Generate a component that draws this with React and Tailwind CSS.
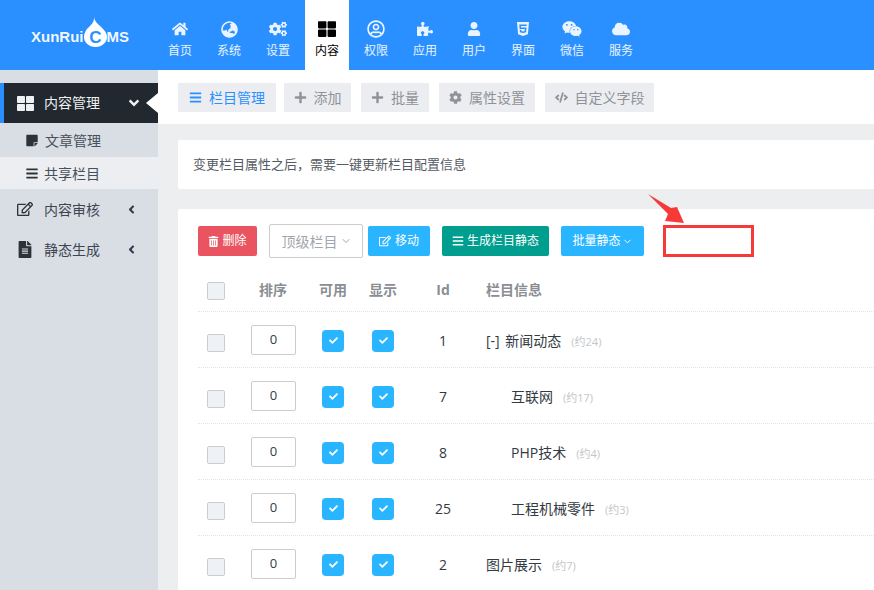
import React from 'react';
import {
  FaHome, FaGlobeAsia, FaCogs, FaThLarge, FaRegUserCircle, FaPuzzlePiece, FaUser, FaHtml5, FaWeixin, FaCloud,
  FaBars, FaPlus, FaCog, FaCode, FaStickyNote, FaRegEdit, FaFileAlt, FaTrashAlt, FaCheck, FaAngleDown, FaAngleLeft,
} from 'react-icons/fa';
import { ChevronDown } from 'lucide-react';

const navItems = [
  { label: '首页', icon: FaHome, size: 'text-[16px]' },
  { label: '系统', icon: FaGlobeAsia, size: 'text-[17px]' },
  { label: '设置', icon: FaCogs, size: 'text-[18px]' },
  { label: '内容', icon: FaThLarge, size: 'text-[18px]', active: true },
  { label: '权限', icon: FaRegUserCircle, size: 'text-[18px]' },
  { label: '应用', icon: FaPuzzlePiece, size: 'text-[16px]' },
  { label: '用户', icon: FaUser, size: 'text-[14px]' },
  { label: '界面', icon: FaHtml5, size: 'text-[16px]' },
  { label: '微信', icon: FaWeixin, size: 'text-[20px]' },
  { label: '服务', icon: FaCloud, size: 'text-[18px]' },
];

const rows = [
  { id: 1, name: '[-] 新闻动态', count: '(约24)' },
  { id: 7, name: '互联网', count: '(约17)', child: true },
  { id: 8, name: 'PHP技术', count: '(约4)', child: true },
  { id: 25, name: '工程机械零件', count: '(约3)', child: true },
  { id: 2, name: '图片展示', count: '(约7)' },
];

function Logo() {
  return (
    <div className="flex h-full w-[158px] shrink-0 items-center pl-[31px] pt-[5px] text-[15px] font-bold text-white/95 font-['Liberation_Sans',sans-serif]">
      <span>XunRui</span>
      <svg width="23" height="30" viewBox="0 0 23 30" className="mb-[12px] shrink-0">
        <path d="M10 0c.5 4 3 6 6 9 4 3.500 7 7 7 11 0 5.500-5 10-11.500 10S0 25.500 0 20c0-4 2-7.500 5-10 2-2 5.500-5 5-10z" fill="#fff" />
        <text x="11.500" y="26" textAnchor="middle" fontSize="17" fontWeight="700" fill="#2b90ff" fontFamily="Liberation Sans, sans-serif">C</text>
      </svg>
      <span>MS</span>
    </div>
  );
}

function Tab({ icon: Icon, label, active, className }) {
  return (
    <div className={`flex h-[29px] items-center justify-center gap-[7px] bg-[#ecedf0] text-[14px] ${active ? 'text-[#2b90ff]' : 'text-[#8f9399]'} ${className}`}>
      <Icon className="text-[13px]" />
      <span>{label}</span>
    </div>
  );
}

function Check() {
  return (
    <span className="flex h-[22px] w-[22px] items-center justify-center rounded-[4px] bg-[#29b5ff] text-[9px] text-white">
      <FaCheck />
    </span>
  );
}

function SideItem({ icon: Icon, label, iconSize }) {
  return (
    <div className="flex h-[40px] items-center pr-[20px] text-[14px] text-[#3c4650]">
      <Icon className={`ml-[17px] w-[16px] text-[#2c3238] ${iconSize}`} />
      <span className="ml-[11px] flex-1">{label}</span>
      <FaAngleLeft className="text-[13px] text-[#2c3a4a]" />
    </div>
  );
}

export default function App() {
  return (
    <div className="flex h-[590px] w-[874px] flex-col overflow-hidden bg-[#eceef0] font-['Open_Sans','Noto_Sans_CJK_SC',sans-serif]">
      <header className="flex h-[70px] shrink-0 bg-[#2b90ff]">
        <Logo />
        <nav className="flex gap-[5px]">
          {navItems.map(({ label, icon: Icon, active, size }) => (
            <div key={label} className={`flex w-[44px] flex-col items-center pt-[20px] ${active ? 'bg-white text-black' : 'text-white/90'}`}>
              <span className={`flex h-[18px] items-center ${size}`}><Icon /></span>
              <span className="mt-[3px] text-[12px] leading-[20px]">{label}</span>
            </div>
          ))}
        </nav>
      </header>

      <div className="flex min-h-0 flex-1">
        <aside className="w-[158px] shrink-0 bg-[#d9dde4] pt-[13px]">
          <div className="relative flex h-[40px] items-center border-l-4 border-[#2b90ff] bg-[#22282f] pr-[16px] text-[14px] text-[#eef0f2]">
            <FaThLarge className="ml-[13px] text-[17px]" />
            <span className="ml-[10px] flex-1 pb-[2px]">内容管理</span>
            <FaAngleDown className="text-[16px]" />
            <span className="absolute right-0 top-[10px] h-0 w-0 border-y-[10px] border-r-[12px] border-y-transparent border-r-white" />
          </div>
          <div className="flex h-[34px] items-center pl-[26px] text-[14px] text-[#46505a]">
            <FaStickyNote className="w-[12px] text-[13px] text-[#2c3238]" />
            <span className="ml-[7px]">文章管理</span>
          </div>
          <div className="flex h-[32px] items-center bg-[#eceef1] pl-[26px] text-[14px] text-[#46505a]">
            <FaBars className="w-[12px] text-[13px] text-[#2c3238]" />
            <span className="ml-[6px]">共享栏目</span>
          </div>
          <SideItem icon={FaRegEdit} label="内容审核" iconSize="text-[16px]" />
          <SideItem icon={FaFileAlt} label="静态生成" iconSize="text-[17px]" />
        </aside>

        <main className="flex min-w-0 flex-1 flex-col">
          <div className="flex h-[54px] shrink-0 items-start gap-[10px] bg-white pl-[20px] pt-[13px]">
            <Tab icon={FaBars} label="栏目管理" active className="w-[98px]" />
            <Tab icon={FaPlus} label="添加" className="-ml-[2px] w-[67px]" />
            <Tab icon={FaPlus} label="批量" className="w-[68px]" />
            <Tab icon={FaCog} label="属性设置" className="w-[96px]" />
            <Tab icon={FaCode} label="自定义字段" className="w-[109px]" />
          </div>

          <div className="mt-[16px] ml-[20px] flex h-[49px] shrink-0 items-center rounded-l-[2px] bg-white pl-[15px] text-[13px] text-[#555b63]">
            变更栏目属性之后，需要一键更新栏目配置信息
          </div>

          <section className="relative mt-[20px] ml-[20px] flex-1 rounded-tl-[2px] bg-white pl-[20px]">
            <svg width="37" height="32" viewBox="0 0 37 32" className="absolute -top-[16px] left-[470px]">
              <polygon points="0,1 23,15 29,14 36,30 17,28 20,21" fill="#f63a3a" />
            </svg>

            <div className="flex items-center pt-[15px] text-[12px] text-white">
              <div className="flex h-[30px] w-[59px] items-center justify-center gap-[3px] rounded-[2px] bg-[#ea5460]">
                <FaTrashAlt className="text-[11px]" />
                <span>删除</span>
              </div>
              <div className="ml-[12px] flex h-[34px] w-[94px] items-center justify-center gap-[2px] rounded-[2px] border border-[#ccc] pl-[1px] text-[14px] text-[#a3a6aa]">
                <span>顶级栏目</span>
                <ChevronDown size={12} />
              </div>
              <div className="ml-[5px] flex h-[30px] w-[62px] items-center justify-center gap-[4px] rounded-[2px] bg-[#29b5ff]">
                <FaRegEdit className="text-[12px]" />
                <span>移动</span>
              </div>
              <div className="ml-[12px] flex h-[30px] w-[107px] items-center justify-center gap-[3px] rounded-[2px] bg-[#009e8f]">
                <FaBars className="text-[12px]" />
                <span>生成栏目静态</span>
              </div>
              <div className="ml-[12px] flex h-[30px] w-[83px] items-center justify-center gap-[1px] rounded-[2px] bg-[#29b5ff]">
                <span>批量静态</span>
                <ChevronDown size={11} />
              </div>
              <div className="ml-[19px] h-[32px] w-[91px] border-[3px] border-[#f63a3a]" />
            </div>

            <div className="mt-[14px] grid h-[39px] grid-cols-[45px_61px_58px_42px_78px_1fr] items-start text-[14px] font-bold text-[#8a8e93]">
              <span className="pl-[9px] pt-[10px]"><span className="block h-[18px] w-[18px] rounded-[2px] border border-[#ccc] bg-[#eef1f5]" /></span>
              <span className="pl-[16px] pt-[7px]">排序</span>
              <span className="pt-[7px] text-center">可用</span>
              <span className="pt-[7px] text-center">显示</span>
              <span className="pt-[7px] text-center">Id</span>
              <span className="pl-[4px] pt-[7px]">栏目信息</span>
            </div>

            {rows.map((row) => (
              <div key={row.id} className="grid h-[56px] grid-cols-[45px_61px_58px_42px_78px_1fr] items-center border-t border-dotted border-[#e4e4e4] text-[14px] text-[#333a42]">
                <span className="pl-[9px] pt-[6px]"><span className="block h-[18px] w-[18px] rounded-[2px] border border-[#ccc] bg-[#eef1f5]" /></span>
                <span className="pl-[8px]">
                  <span className="flex h-[30px] w-[45px] items-center justify-center rounded-[2px] border border-[#ccc] text-[13px]">0</span>
                </span>
                <span className="flex justify-center pt-[2px]"><Check /></span>
                <span className="flex justify-center pt-[2px]"><Check /></span>
                <span className="pt-[2px] text-center">{row.id}</span>
                <span className={row.child ? 'pl-[29px] pt-[2px]' : 'pl-[4px] pt-[2px] [word-spacing:2px]'}>
                  {row.name}
                  <span className="ml-[10px] text-[11px] text-[#c4c6c9]">{row.count}</span>
                </span>
              </div>
            ))}
          </section>
        </main>
      </div>
    </div>
  );
}
